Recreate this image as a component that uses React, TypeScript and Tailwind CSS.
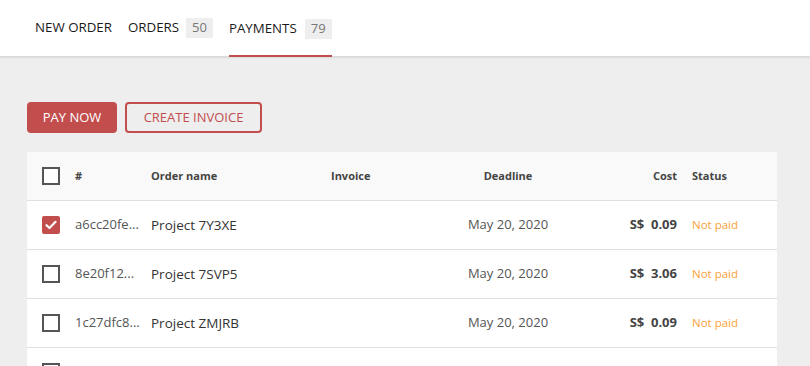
import React from "react";

const rows = [
  { id: "a6cc20fe...", name: "Project 7Y3XE", date: "May 20, 2020", cost: "0.09", checked: true },
  { id: "8e20f12...", name: "Project 7SVP5", date: "May 20, 2020", cost: "3.06", checked: false },
  { id: "1c27dfc8...", name: "Project ZMJRB", date: "May 20, 2020", cost: "0.09", checked: false },
  { id: "", name: "", date: "", cost: "", checked: false },
];

function Box({ checked }: { checked: boolean }) {
  if (checked)
    return (
      <div className="w-[18px] h-[18px] rounded-[2px] bg-[#c24d4d] flex items-center justify-center">
        <svg width="12" height="10" viewBox="0 0 12 10" fill="none">
          <path d="M1.5 5.2 L4.5 8 L10.5 1.8" stroke="white" strokeWidth="2.2" strokeLinecap="round" strokeLinejoin="round" />
        </svg>
      </div>
    );
  return <div className="w-[18px] h-[18px] border-2 border-[#555] bg-white" />;
}

export default function App() {
  return (
    <div className="w-[810px] h-[366px] overflow-hidden bg-[#eeeeee] text-[#444]" style={{ fontFamily: '"Open Sans", sans-serif' }}>
      <div className="h-[57px] bg-white border-b border-[#d9d9d9] shadow-[0_1px_2px_rgba(0,0,0,0.08)] flex items-stretch pl-[35px] gap-[16px] text-[13.3px] text-[#1a1a1a]">
        <div className="flex items-center">NEW ORDER</div>
        <div className="flex items-center gap-[7px]">
          <span>ORDERS</span>
          <span className="bg-[#eeeeee] text-[#777] text-[13px] px-[6px] h-[20px] flex items-center">50</span>
        </div>
        <div className="flex items-center gap-[8px] border-b-[2px] border-[#c24d4d] pt-[2px] -mb-px">
          <span>PAYMENTS</span>
          <span className="bg-[#eeeeee] text-[#777] text-[13px] px-[6px] h-[20px] flex items-center">79</span>
        </div>
      </div>
      <div className="pl-[27px] pt-[45px] flex gap-[8px]">
        <button className="w-[90px] h-[31px] rounded-[4px] bg-[#c24d4d] text-white text-[13px]">PAY NOW</button>
        <button className="w-[137px] h-[31px] rounded-[4px] border-2 border-[#c24d4d] text-[#c24d4d] text-[13px]">CREATE INVOICE</button>
      </div>
      <div className="ml-[27px] mt-[19px] w-[750px] bg-white">
        <div className="h-[49px] bg-[#f9f9f9] border-b border-[#e0e0e0] flex items-center text-[11px] font-bold text-[#444]">
          <div className="w-[48px] pl-[15px]"><Box checked={false} /></div>
          <div className="w-[76px]">#</div>
          <div className="w-[180px]">Order name</div>
          <div className="w-[100px]">Invoice</div>
          <div className="w-[154px] text-center">Deadline</div>
          <div className="w-[92px] text-right">Cost</div>
          <div className="pl-[15px]">Status</div>
        </div>
        {rows.map((r, i) => (
          <div key={i} className="h-[49px] border-b border-[#e0e0e0] flex items-center text-[13px] text-[#444]">
            <div className="w-[48px] pl-[15px]"><Box checked={r.checked} /></div>
            <div className="w-[76px] text-[#555]">{r.id}</div>
            <div className="w-[180px] text-[13.5px] text-[#333]">{r.name}</div>
            <div className="w-[100px]"></div>
            <div className="w-[154px] text-center text-[#555]">{r.date}</div>
            <div className="w-[92px] text-right font-bold">{r.cost && <>S$&nbsp;&nbsp;{r.cost}</>}</div>
            <div className="pl-[15px] text-[11.5px] text-[#f8a23a]">{r.cost && "Not paid"}</div>
          </div>
        ))}
      </div>
    </div>
  );
}
